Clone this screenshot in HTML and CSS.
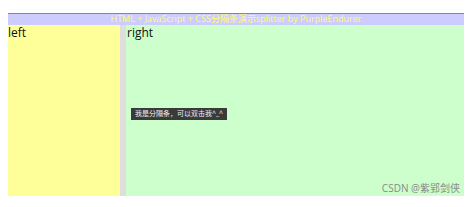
FILE: index.html
```html
<!DOCTYPE html>
<html>
<head>
<meta charset="utf-8">
<link rel="stylesheet" href="styles.css">
</head>
<body>
<div class="page">
  <div class="header">HTML + JavaScript + CSS分隔条演示splitter by PurpleEndurer</div>
  <div class="main">
    <div class="left">left</div>
    <div class="splitter"></div>
    <div class="right">
      right
      <div class="tip">我是分隔条，可以双击我^_^</div>
      <div class="mark">CSDN @紫郢剑侠</div>
    </div>
  </div>
</div>
</body>
</html>
```
FILE: styles.css
```css
html, body {
  margin: 0;
  padding: 0;
  background: #ffffff;
}
body {
  font-family: "Open Sans", "Noto Sans CJK SC", sans-serif;
}
.page {
  margin: 13px 10px 0 8px;
  width: 456px;
}
.header {
  box-sizing: border-box;
  height: 12px;
  border-top: 1px solid #9a72c8;
  background: #ccccff;
  color: #ffff66;
  text-align: center;
  font-size: 9px;
  line-height: 10px;
  white-space: nowrap;
  overflow: hidden;
}
.main {
  display: flex;
  height: 171px;
}
.left {
  width: 112px;
  background: #ffff99;
  font-size: 12px;
  line-height: 13px;
  padding-top: 1px;
  color: #111;
}
.splitter {
  width: 6px;
  background: #dedede;
}
.right {
  flex: 1;
  background: #ccffcc;
  position: relative;
  font-size: 12px;
  line-height: 13px;
  padding-top: 1px;
  color: #111;
  padding-left: 1px;
}
.tip {
  position: absolute;
  left: 5px;
  top: 83px;
  background: #3a3a3a;
  color: #f0f0f0;
  font-size: 7px;
  line-height: 12px;
  padding: 0 4px;
  white-space: nowrap;
}
.mark {
  position: absolute;
  right: 4px;
  bottom: 2px;
  color: #8a8a8a;
  font-size: 10px;
  line-height: 12px;
  white-space: nowrap;
}
```
